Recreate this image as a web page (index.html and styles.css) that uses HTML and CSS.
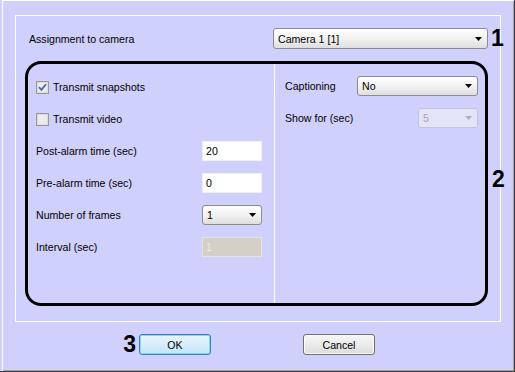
FILE: index.html
```html
<!DOCTYPE html>
<html lang="en">
<head>
  <meta charset="UTF-8">
  <title>Assignment to camera</title>
  <link rel="stylesheet" href="styles.css">
</head>
<body>
  <div class="window">
    <div class="frame">
      <div class="camera-row">
        <span class="label">Assignment to camera</span>
        <div class="select camera-select">
          <span>Camera 1 [1]</span>
          <svg class="arrow" width="7" height="4" viewBox="0 0 7 4"><path d="M0 0h7L3.5 4z"/></svg>
        </div>
        <span class="mark">1</span>
      </div>

      <div class="settings-row">
        <div class="highlight">
          <div class="panel panel-left">
            <div class="row">
              <span class="check-label">
                <svg class="checkbox" width="13" height="13" viewBox="0 0 13 13">
                  <rect x="0.5" y="0.5" width="12" height="12" fill="#ececec" stroke="#979797"/>
                  <rect x="1.5" y="1.5" width="10" height="10" fill="none" stroke="#dcdcdc"/>
                  <path d="M3 6.2l2.4 2.6L10 3.2" fill="none" stroke="#4b64b4" stroke-width="1.8"/>
                </svg>
                Transmit snapshots
              </span>
            </div>
            <div class="row">
              <span class="check-label">
                <svg class="checkbox" width="13" height="13" viewBox="0 0 13 13">
                  <rect x="0.5" y="0.5" width="12" height="12" fill="#ececec" stroke="#979797"/>
                  <rect x="1.5" y="1.5" width="10" height="10" fill="none" stroke="#dcdcdc"/>
                </svg>
                Transmit video
              </span>
            </div>
            <div class="row">
              <span>Post-alarm time (sec)</span>
              <div class="input">20</div>
            </div>
            <div class="row">
              <span>Pre-alarm time (sec)</span>
              <div class="input">0</div>
            </div>
            <div class="row">
              <span>Number of frames</span>
              <div class="select small-select">
                <span>1</span>
                <svg class="arrow" width="7" height="4" viewBox="0 0 7 4"><path d="M0 0h7L3.5 4z"/></svg>
              </div>
            </div>
            <div class="row">
              <span>Interval (sec)</span>
              <div class="input disabled">1</div>
            </div>
          </div>

          <div class="panel panel-right">
            <div class="row">
              <span>Captioning</span>
              <div class="select caption-select">
                <span>No</span>
                <svg class="arrow" width="7" height="4" viewBox="0 0 7 4"><path d="M0 0h7L3.5 4z"/></svg>
              </div>
            </div>
            <div class="row">
              <span>Show for (sec)</span>
              <div class="select small-select disabled">
                <span>5</span>
                <svg class="arrow" width="7" height="4" viewBox="0 0 7 4"><path d="M0 0h7L3.5 4z"/></svg>
              </div>
            </div>
          </div>
        </div>
        <span class="mark mark-side">2</span>
      </div>
    </div>

    <div class="buttons">
      <div class="button-wrap">
        <span class="mark mark-button">3</span>
        <button class="btn btn-default">OK</button>
      </div>
      <button class="btn">Cancel</button>
    </div>
  </div>
</body>
</html>
```

FILE: styles.css
```css
html, body {
  margin: 0;
  padding: 0;
  background: #d0d0fc;
}

.window {
  width: 515px;
  height: 372px;
  box-sizing: border-box;
  background: #d0d0fc;
  font-family: 'Liberation Sans', Arial, sans-serif;
  font-size: 10.6px;
  color: #000;
  border-right: 1px solid #404040;
  border-bottom: 1px solid #404040;
  box-shadow: inset 2px 0 0 #d0d0fc, inset 3px 1px 0 #fff, inset -1px -1px 0 #a0a0a0;
  overflow: hidden;
}

.frame {
  margin: 15px 0 0 15px;
  width: 486px;
  height: 307px;
  box-sizing: border-box;
  border: 1px solid #fff;
  padding: 12px 0 0 9px;
}

.camera-row {
  display: flex;
  align-items: center;
  height: 21px;
  padding-left: 4px;
}

.camera-row .label {
  width: 244px;
  flex-shrink: 0;
}

.select {
  display: flex;
  align-items: center;
  justify-content: space-between;
  flex-shrink: 0;
  box-sizing: border-box;
  border: 1px solid #8c8c8c;
  border-radius: 3px;
  background: linear-gradient(#ffffff, #f2f2f2 50%, #dedede);
  padding: 0 5px 0 4px;
}

.select .arrow {
  fill: #000;
}

.select.disabled {
  background: #e4e4f8;
  border-color: #c4c4d8;
  color: #a4a4a4;
}

.select.disabled .arrow {
  fill: #b0b0b0;
}

.camera-select {
  width: 215px;
  height: 21px;
}

.caption-select {
  width: 121px;
  height: 20px;
}

.small-select {
  width: 60px;
  height: 20px;
}

.mark {
  flex-shrink: 0;
  font-weight: bold;
  font-size: 23px;
  line-height: 23px;
}

.camera-row .mark {
  margin-left: 3px;
}

.settings-row {
  display: flex;
  margin-top: 12px;
}

.highlight {
  display: flex;
  flex-shrink: 0;
  width: 463px;
  height: 245px;
  box-sizing: border-box;
  border: 3px solid #000;
  border-radius: 16px;
}

.panel {
  box-sizing: border-box;
}

.panel-left {
  width: 247px;
  flex-shrink: 0;
  border-right: 1px solid #fff;
  padding: 7px 12px 0 8px;
}

.panel-right {
  flex: 1;
  padding: 6px 7px 0 10px;
}

.row {
  display: flex;
  align-items: center;
  justify-content: space-between;
  height: 32px;
}

.check-label {
  display: flex;
  align-items: center;
  gap: 4px;
}

.checkbox {
  display: block;
}

.input {
  width: 60px;
  height: 20px;
  flex-shrink: 0;
  box-sizing: border-box;
  background: #fff;
  border: 1px solid #f0f0f0;
  padding-left: 3px;
  line-height: 18px;
}

.input.disabled {
  background: #d4d0c8;
  border-color: #e4e2dc;
  color: #f4f4f4;
  text-shadow: 0 0 0 #a8a8a8;
}

.mark-side {
  margin: 107px 0 0 4px;
}

.buttons {
  display: flex;
  justify-content: center;
  gap: 92px;
  margin-top: 12px;
}

.button-wrap {
  position: relative;
}

.mark-button {
  position: absolute;
  right: 75px;
  top: -1px;
}

.btn {
  display: block;
  width: 72px;
  height: 21px;
  padding: 0;
  font-family: 'Liberation Sans', Arial, sans-serif;
  font-size: 10.6px;
  color: #000;
  border: 1px solid #707070;
  border-radius: 3px;
  background: linear-gradient(#f6f6f6, #ebebeb 50%, #dcdcdc);
  box-shadow: inset 0 0 0 1px #fbfbfb;
}

.btn-default {
  border-color: #3c7fb1;
  background: linear-gradient(#e8f4fc, #d8eefa 50%, #bee6fd);
  box-shadow: inset 0 0 0 1px #8ad4f8;
}
```
